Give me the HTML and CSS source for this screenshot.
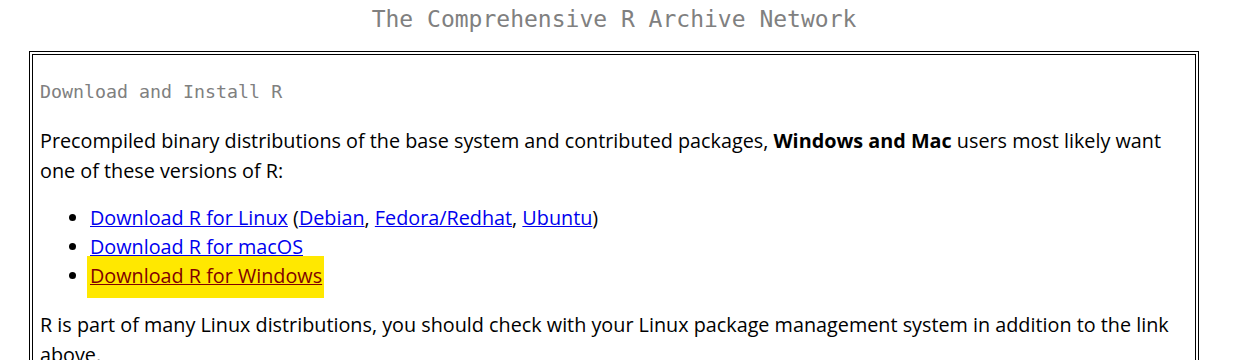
FILE: index.html
```html
<!DOCTYPE html>
<html>
<head>
    <link rel="stylesheet" href="styles.css">
</head>
<body>
    <div class="page">
        <h1 class="title">The Comprehensive R Archive Network</h1>
        <div class="frame">
            <h2 class="section">Download and Install R</h2>
            <p>Precompiled binary distributions of the base system and contributed packages, <b>Windows and Mac</b> users most likely want one of these versions of R:</p>
            <ul class="downloads">
                <li><a href="#">Download R for Linux</a> (<a href="#">Debian</a>, <a href="#">Fedora/Redhat</a>, <a href="#">Ubuntu</a>)</li>
                <li><a href="#">Download R for macOS</a></li>
                <li><span class="marker"><a href="#" class="visited">Download R for Windows</a></span></li>
            </ul>
            <p>R is part of many Linux distributions, you should check with your Linux package management system in addition to the link above.</p>
        </div>
    </div>
</body>
</html>
```

FILE: styles.css
```css
body {
    margin: 0;
    padding: 0;
    background: #ffffff;
    color: #000000;
    font-family: 'Open Sans', Lato, sans-serif;
    font-size: 19.8px;
    line-height: 29.5px;
}

.page {
    width: 1170px;
    margin-left: 29px;
}

.title {
    margin: 0;
    padding-top: 5px;
    height: 46px;
    text-align: center;
    font-family: 'DejaVu Sans Mono', 'Liberation Mono', monospace;
    font-weight: normal;
    font-size: 23px;
    line-height: 28px;
    color: #808080;
}

.frame {
    border: 4px double #000000;
    padding: 20px 8px 0 7px;
    height: 400px;
}

.section {
    margin: 5px 0 22px 0;
    font-family: 'DejaVu Sans Mono', 'Liberation Mono', monospace;
    font-weight: normal;
    font-size: 18.3px;
    line-height: 24px;
    color: #808080;
}

p {
    margin: 0 0 18px 0;
}

.downloads {
    margin: 0 0 20px 0;
    padding-left: 50px;
}

.downloads li {
    line-height: 29px;
}

a {
    color: #0000ee;
}

a.visited {
    color: #800000;
}

.marker {
    background: #ffe800;
    margin-left: -3px;
    padding: 6px 2px 9px 3px;
}
```
